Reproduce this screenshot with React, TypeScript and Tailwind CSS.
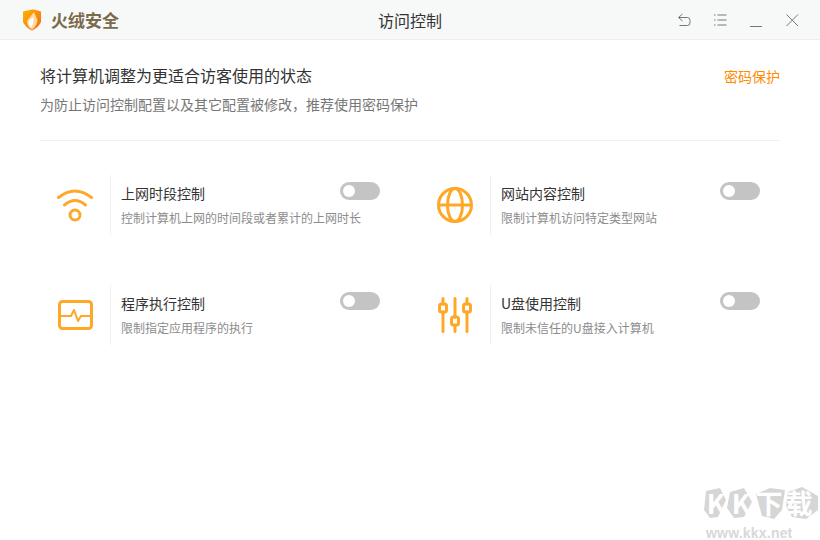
const font = { fontFamily: '"Noto Sans CJK SC", "Liberation Sans", sans-serif' };

function Logo() {
  return (
    <svg width="20" height="22" viewBox="0 0 20 22" className="mr-[9px]">
      <defs>
        <linearGradient id="shield" x1="0" y1="0" x2="1" y2="1">
          <stop offset="0" stopColor="#ffb400" />
          <stop offset="1" stopColor="#f26a10" />
        </linearGradient>
      </defs>
      <path d="M1 2.5 L10 0.5 L12 0.5 L19 2.5 L19 13 Q17 18 10 21.5 Q3 18 1 13 Z" fill="url(#shield)" />
      <path d="M12 3 Q14 8 15.5 11 Q15 17 10 20.5 Q5 18 5 12 Q7 9 12 3 Z" fill="#ffd9a0" />
      <path d="M11 8 Q12.5 13 9 19 Q6 15 7 12 Z" fill="#ffffff" />
    </svg>
  );
}

function WifiIcon() {
  return (
    <svg width="36" height="34" viewBox="0 0 36 34" fill="none" stroke="#ffa726" strokeWidth="3" strokeLinecap="round">
      <path d="M1.5 9.5 Q18 -3.5 34.5 9.5" />
      <path d="M7.5 17 Q18 8 28.5 17" />
      <circle cx="18" cy="27" r="5" />
    </svg>
  );
}

function GlobeIcon() {
  return (
    <svg width="36" height="36" viewBox="0 0 36 36" fill="none" stroke="#ffa726" strokeWidth="3">
      <circle cx="18" cy="18" r="16.5" />
      <path d="M1.5 18 H34.5" />
      <ellipse cx="18" cy="18" rx="7.5" ry="16.5" />
    </svg>
  );
}

function MonitorIcon() {
  return (
    <svg width="35" height="30" viewBox="0 0 35 30" fill="none" stroke="#ffa726" strokeWidth="3" strokeLinejoin="round">
      <rect x="1.5" y="1.5" width="32" height="27" rx="3" />
      <path d="M2 16 H13 L16 10 L20 21 L23 16 H33" strokeWidth="2" />
    </svg>
  );
}

function SlidersIcon() {
  return (
    <svg width="34" height="36" viewBox="0 0 34 36" fill="none" stroke="#ffa726" strokeWidth="3" strokeLinecap="round">
      <path d="M5 1.5 V7 M5 15 V34.5" />
      <rect x="1.5" y="7" width="7" height="8" rx="2" />
      <path d="M17 1.5 V20 M17 29 V34.5" />
      <rect x="13.5" y="20" width="7" height="8" rx="2" />
      <path d="M29 1.5 V7 M29 15 V34.5" />
      <rect x="25.5" y="7" width="7" height="8" rx="2" />
    </svg>
  );
}

function Toggle() {
  return (
    <div className="absolute right-5 top-[7px] flex h-[18px] w-10 items-center rounded-full bg-[#c4c4c4] pl-[3px]">
      <div className="h-3 w-3 rounded-full bg-white" />
    </div>
  );
}

function Card({ icon, title, desc }: { icon: React.ReactNode; title: string; desc: string }) {
  return (
    <div className="relative flex h-[60px]">
      <div className="box-content flex w-[70px] shrink-0 items-center justify-center border-r border-[#f0f0f0]">{icon}</div>
      <div className="pl-[10px]">
        <div className="mt-[7px] h-[22px] text-[14px] leading-[22px] text-[#333333]">{title}</div>
        <div className="mt-[4px] text-[12px] leading-[20px] text-[#8c8c8c]">{desc}</div>
      </div>
      <Toggle />
    </div>
  );
}

function Watermark() {
  return (
    <div className="absolute bottom-0 right-0 h-[70px] w-[130px]">
      <svg width="130" height="50" viewBox="0 0 130 50" className="absolute left-0 top-0">
        <g fill="#d6d6d6">
          <polygon points="16,21 30,18 36,30 28,47 20,48 14,40" />
          <polygon points="40,22 54,18 62,32 54,47 44,48 37,38" />
          <polygon points="66,24 80,18 95,20 92,40 84,49 72,46" />
          <polygon points="98,22 112,17 128,26 128,40 116,49 102,47 96,36" />
        </g>
      </svg>
      <div className="absolute left-[14px] top-[16px] flex text-[27px] font-bold leading-[34px] text-white">
        <span className="w-[24px] text-center">K</span>
        <span className="w-[26px] text-center">K</span>
        <span className="w-[30px] text-center">下</span>
        <span className="w-[30px] text-center">载</span>
      </div>
      <div className="absolute left-[16px] top-[55px] text-[14px] font-bold leading-[16px] tracking-[0.2px] text-[#d8d8d8]" style={{ fontFamily: '"Liberation Sans", sans-serif' }}>www.kkx.net</div>
    </div>
  );
}

export default function App() {
  return (
    <div className="relative h-[540px] w-[820px] overflow-hidden bg-white" style={font}>
      <div className="relative flex h-10 items-center border-b border-[#eeeeee] bg-[#f7f9f9] pl-[22px]">
        <Logo />
        <span className="text-[17px] font-bold text-[#7b6a4c]">火绒安全</span>
        <span className="absolute left-0 right-0 text-center text-[16px] text-[#333333]">访问控制</span>
        <div className="ml-auto mr-[21px] flex items-center gap-[22px]">
          <svg width="14" height="14" viewBox="0 0 14 14" fill="none" stroke="#777777">
            <path d="M5.5 1 L1.5 4.5 L5.5 8 M1.5 4.5 H10.5 Q13 4.5 13 7.5 V9.5 Q13 12.5 10.5 12.5 H2.5" />
          </svg>
          <svg width="14" height="14" viewBox="0 0 14 14" fill="none" stroke="#777777">
            <path d="M1 2 H2.5 M1 7 H2.5 M1 12 H2.5 M4.5 2 H13.5 M4.5 7 H13.5 M4.5 12 H13.5" />
          </svg>
          <svg width="14" height="14" viewBox="0 0 14 14" fill="none" stroke="#777777">
            <path d="M1 13.5 H13" />
          </svg>
          <svg width="14" height="14" viewBox="0 0 14 14" fill="none" stroke="#777777">
            <path d="M1.5 1.5 L13 13 M13 1.5 L1.5 13" />
          </svg>
        </div>
      </div>

      <div className="mx-10">
        <div className="flex h-[101px] border-b border-[#f0f0f0] pt-[23px]">
          <div>
            <div className="text-[16px] leading-[24px] text-[#333333]">将计算机调整为更适合访客使用的状态</div>
            <div className="mt-[5px] text-[14px] leading-[24px] text-[#777777]">为防止访问控制配置以及其它配置被修改，推荐使用密码保护</div>
          </div>
          <div className="ml-auto mt-px text-[14px] leading-[24px] text-[#ff8a00]">密码保护</div>
        </div>
        <div className="mt-[34px] grid grid-cols-2 gap-x-5 gap-y-[50px]">
          <Card icon={<WifiIcon />} title="上网时段控制" desc="控制计算机上网的时间段或者累计的上网时长" />
          <Card icon={<GlobeIcon />} title="网站内容控制" desc="限制计算机访问特定类型网站" />
          <Card icon={<MonitorIcon />} title="程序执行控制" desc="限制指定应用程序的执行" />
          <Card icon={<SlidersIcon />} title="U盘使用控制" desc="限制未信任的U盘接入计算机" />
        </div>
      </div>
      <Watermark />
    </div>
  );
}
